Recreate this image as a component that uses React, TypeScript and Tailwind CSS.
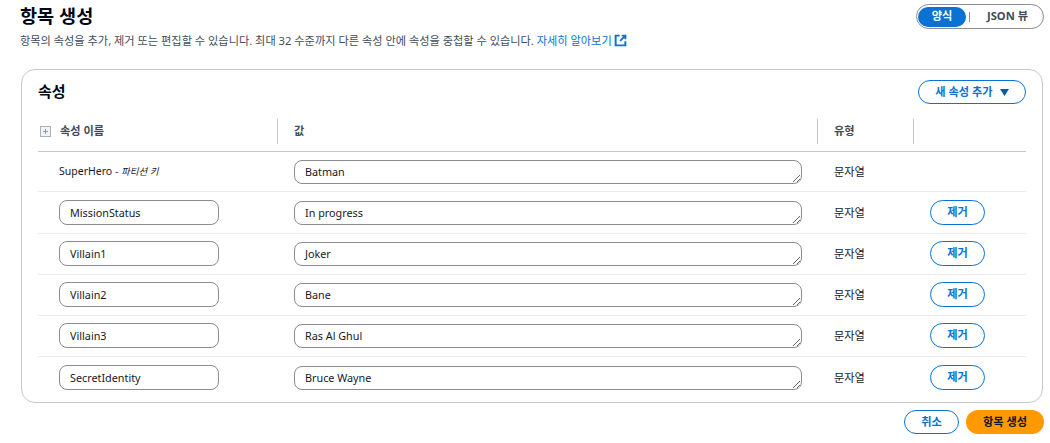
import React from "react";

const rows = [
  { name: "MissionStatus", value: "In progress" },
  { name: "Villain1", value: "Joker" },
  { name: "Villain2", value: "Bane" },
  { name: "Villain3", value: "Ras Al Ghul" },
  { name: "SecretIdentity", value: "Bruce Wayne" },
];

function Value({ value }: { value: string }) {
  return (
    <textarea
      readOnly
      defaultValue={value}
      rows={1}
      className="mt-px block h-[24px] w-[508px] resize-y rounded-lg border border-[#8c8c94] bg-white px-[10px] py-px text-[10.8px] leading-[19px] text-[#16191f] outline-none"
    />
  );
}

function External() {
  return (
    <svg width="13" height="13" viewBox="0 0 16 16" fill="none" stroke="#0972d3" strokeWidth="2.4" className="ml-[2px] inline-block align-[-2px]">
      <path d="M7 2H2v12h12V9" />
      <path d="M9.5 2H14v4.5" />
      <path d="M14 2 7.5 8.5" />
    </svg>
  );
}

export default function App() {
  return (
    <div
      className="flex h-[443px] w-[1050px] flex-col overflow-hidden bg-white pl-[21px] pr-[7px] text-[#16191f]"
      style={{ fontFamily: '"Noto Sans", "Noto Sans CJK KR", sans-serif' }}
    >
      <div className="flex h-[69px] items-start justify-between">
        <div className="-ml-px">
          <h1 className="mt-[4px] text-[18.6px] font-bold leading-[24px] text-[#000716]">항목 생성</h1>
          <p className="mt-[5px] text-[11.2px] leading-[16px] text-[#414d5c]">
            항목의 속성을 추가, 제거 또는 편집할 수 있습니다. 최대 32 수준까지 다른 속성 안에 속성을 중첩할 수 있습니다.{" "}
            <span className="text-[#0972d3]">자세히 알아보기</span>
            <External />
          </p>
        </div>
        <div className="mr-[-1px] mt-[4px] flex h-[25px] w-[128px] items-center rounded-full border border-[#8c8c94] px-[1px]">
          <span className="flex h-[20px] w-[48px] items-center justify-center rounded-full bg-[#0972d3] text-[11.2px] font-bold text-white">양식</span>
          <span className="ml-[3px] h-[10px] w-px bg-[#8c8c94]" />
          <span className="flex-1 pl-[3px] text-center text-[11.2px] font-bold text-[#414d5c]">JSON 뷰</span>
        </div>
      </div>

      <div className="flex h-[334px] w-[1022px] flex-col rounded-[14px] border border-[#c6c6cd] pl-[16px] pr-[16px]">
        <div className="flex h-[49px] items-start justify-between">
          <h2 className="mt-[9px] text-[15px] font-bold leading-[24px] text-[#000716]">속성</h2>
          <button className="mt-[10px] flex h-[24px] w-[108px] items-center justify-center gap-[7px] rounded-full border border-[#0972d3] bg-white text-[11.2px] font-bold text-[#0972d3]">
            새 속성 추가
            <svg width="9" height="7" viewBox="0 0 9 7"><path d="M0 0h9L4.5 7z" fill="#0b5aa8" /></svg>
          </button>
        </div>

        <div className="flex h-[33px] items-start border-b border-[#c6c6cd] pb-[6px] text-[11.2px] font-bold text-[#414d5c]">
          <div className="flex h-[25px] w-[240px] items-center border-r border-[#c6c6cd]">
            <svg width="11" height="11" viewBox="0 0 11 11" className="ml-[2px] mr-[9px]">
              <rect x="0.5" y="0.5" width="10" height="10" fill="#f2f3f3" stroke="#a9b0b8" />
              <path d="M3 5.5h5M5.5 3v5" stroke="#8d99a8" />
            </svg>
            속성 이름
          </div>
          <div className="flex h-[25px] w-[540px] items-center border-r border-[#c6c6cd] pl-[16px]">값</div>
          <div className="flex h-[25px] w-[96px] items-center border-r border-[#c6c6cd] pl-[16px]">유형</div>
        </div>

        <div className="flex h-[40px] items-start border-b border-[#e9ebed] pt-[7px] text-[11.2px]">
          <div className="flex h-[25px] w-[256px] items-center pl-[21px] text-[10.5px]">
            <span>
              SuperHero <span className="text-[#414d5c]">- </span>
              <i className="text-[9.5px]">파티션 키</i>
            </span>
          </div>
          <div className="w-[540px]"><Value value="Batman" /></div>
          <div className="flex h-[25px] items-center pt-px">문자열</div>
        </div>

        {rows.map((r, i) => (
          <div
            key={r.name}
            className={
              i === 0
                ? "flex h-[42px] items-start border-b border-[#e9ebed] pt-[8px] text-[11.2px]"
                : i < rows.length - 1
                  ? "flex h-[41px] items-start border-b border-[#e9ebed] pt-[7px] text-[11.2px]"
                  : "flex h-[41px] items-start pt-[8px] text-[11.2px]"
            }
          >
            <div className="w-[256px] pl-[21px]">
              <input
                readOnly
                defaultValue={r.name}
                className="block h-[25px] w-[160px] rounded-lg border border-[#8c8c94] bg-white px-[10px] text-[10.8px] text-[#16191f] outline-none"
              />
            </div>
            <div className="w-[540px]"><Value value={r.value} /></div>
            <div className="flex h-[25px] w-[96px] items-center pt-px">문자열</div>
            <button className="flex h-[25px] w-[55px] items-center justify-center rounded-full border border-[#0972d3] bg-white text-[11.2px] font-bold text-[#0972d3]">제거</button>
          </div>
        ))}
      </div>

      <div className="-mr-px mt-[7px] flex justify-end gap-[7px]">
        <button className="flex h-[24px] w-[55px] items-center justify-center rounded-full border border-[#0972d3] bg-white text-[11.2px] font-bold text-[#0972d3]">취소</button>
        <button className="flex h-[24px] w-[78px] items-center justify-center rounded-full bg-[#ff9900] text-[11.2px] font-bold text-[#0f1b2a]">항목 생성</button>
      </div>
    </div>
  );
}
